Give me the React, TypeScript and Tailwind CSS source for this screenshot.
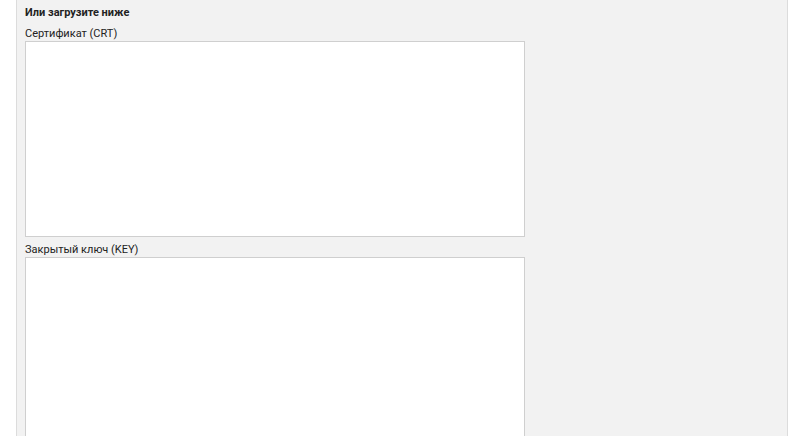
export default function App() {
  return (
    <div className="min-h-[436px] bg-white" style={{ fontFamily: 'Roboto, "Noto Sans", sans-serif' }}>
      <div className="ml-[16px] min-h-[436px] w-[772px] border-x border-[#dcdcdc] bg-[#f2f2f2] px-[8px] pt-[6px] text-[11px] leading-[14px] text-[#222]">
        <div className="font-bold">Или загрузите ниже</div>
        <label className="mt-[7px] block">Сертификат (CRT)</label>
        <textarea className="block h-[196px] w-[500px] resize-none border border-[#cfcfcf] bg-white outline-none" />
        <label className="mt-[6px] block">Закрытый ключ (KEY)</label>
        <textarea className="block h-[196px] w-[500px] resize-none border border-[#cfcfcf] bg-white outline-none" />
      </div>
    </div>
  );
}
